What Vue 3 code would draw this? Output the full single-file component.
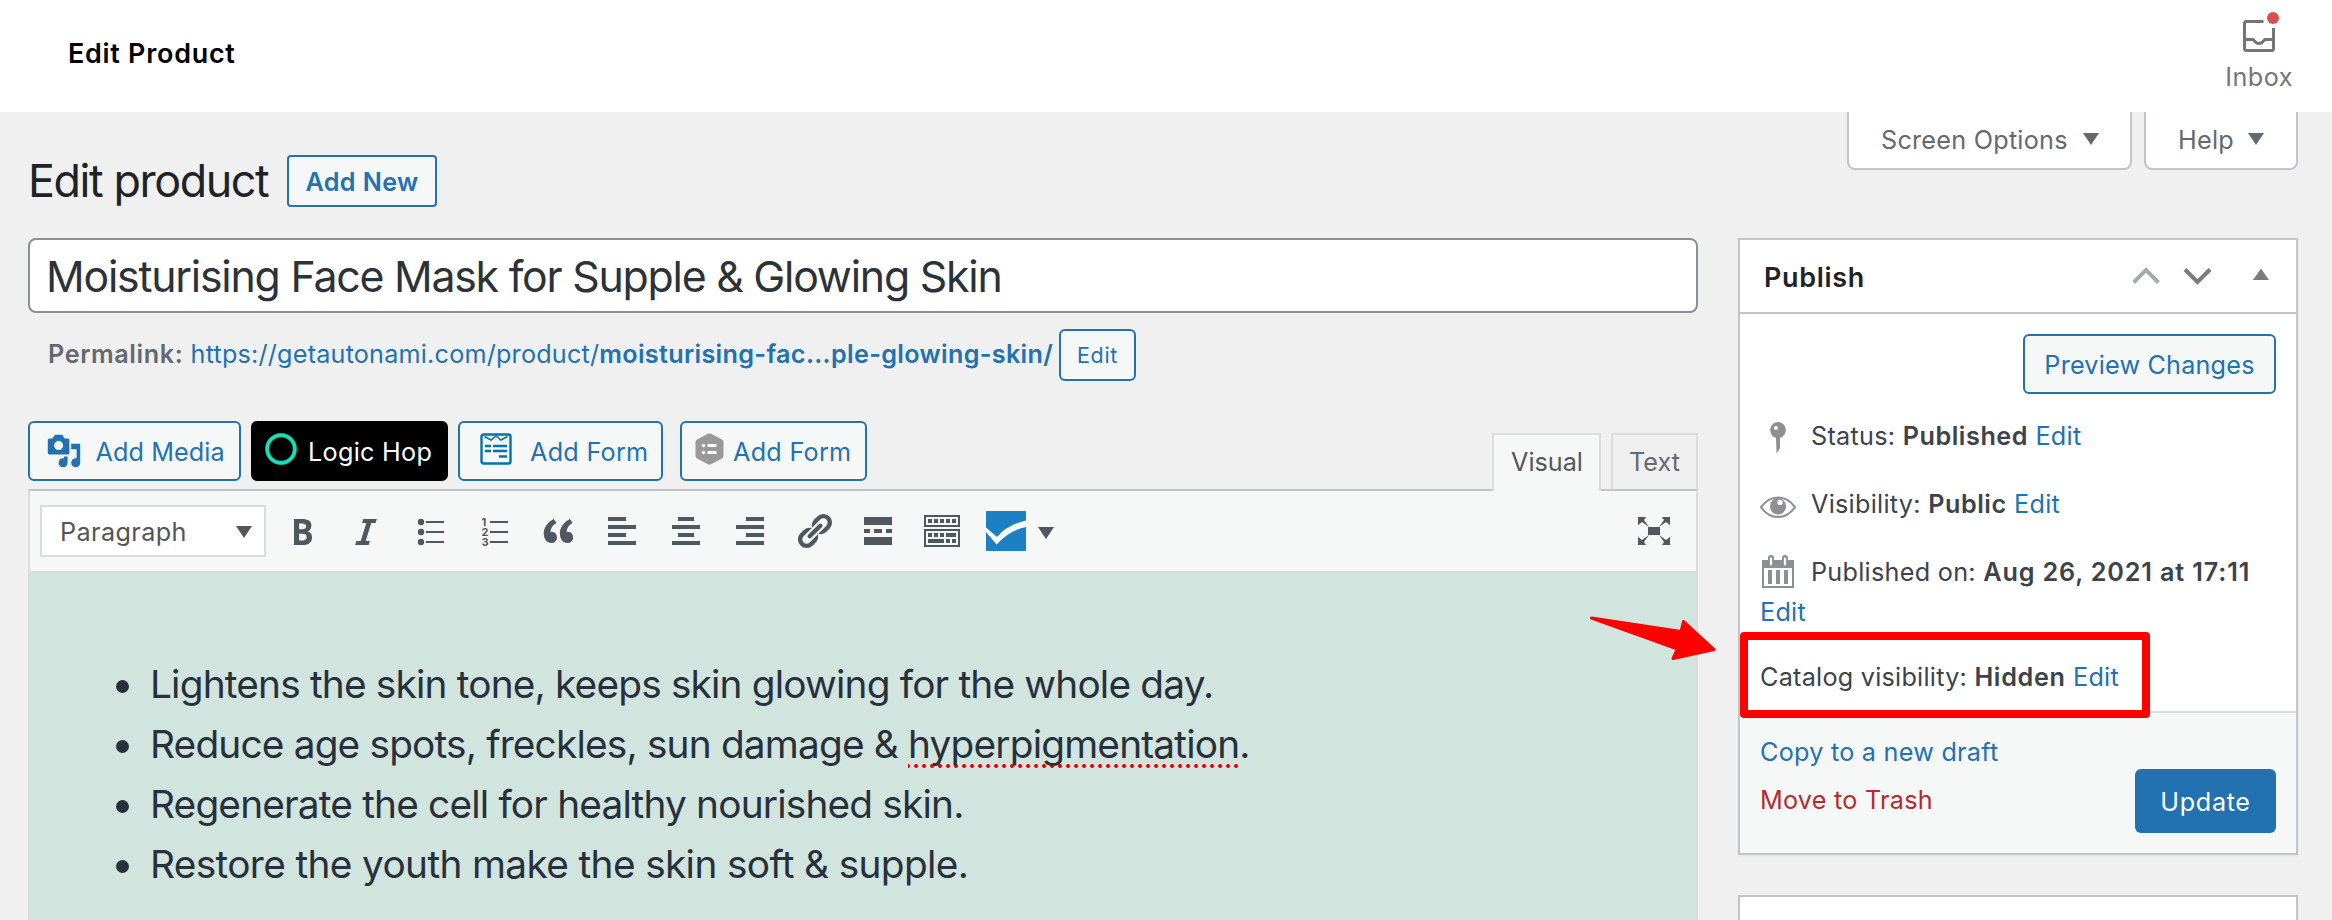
<script setup>
import { ref } from 'vue'

const title = ref('Moisturising Face Mask for Supple & Glowing Skin')

// Bar geometry [x, y, width] for the text alignment buttons
const alignIcons = [
  { name: 'left', bars: [[6, 6, 18], [6, 14, 28], [6, 22, 18], [6, 30, 28]] },
  { name: 'center', bars: [[12, 6, 16], [6, 14, 28], [12, 22, 16], [6, 30, 28]] },
  { name: 'right', bars: [[16, 6, 18], [6, 14, 28], [16, 22, 18], [6, 30, 28]] },
]
const keyboardKeys = [
  [6, 8, 4], [12, 8, 4], [18, 8, 4], [24, 8, 4], [30, 8, 4],
  [6, 22, 4], [12, 22, 4], [18, 22, 4], [24, 22, 10],
  [6, 28, 16], [24, 28, 4], [30, 28, 4],
]
</script>

<template>
  <div class="page">
    <header class="topbar">
      <h2 class="topbar-title">Edit Product</h2>
      <div class="inbox">
        <svg class="inbox-icon" width="38" height="42" viewBox="0 0 38 42">
          <path d="M21.5 11.5H4.5a2 2 0 0 0-2 2v25a2 2 0 0 0 2 2h25a2 2 0 0 0 2-2V18M2.5 29.500h8.500c1.500 0 1.500 4 6 4s4.500-4 6-4h8.500" fill="none" stroke="#757575" stroke-width="3" />
          <circle cx="31" cy="8" r="6" fill="#d94f4f" />
        </svg>
        <span class="inbox-label">Inbox</span>
      </div>
    </header>

    <div class="content-head">
      <div class="heading">
        <h1>Edit product</h1>
        <a class="btn add-new">Add New</a>
      </div>
      <div class="meta-links">
        <a class="meta-link options">Screen Options<svg width="16" height="12"><path d="M0 0h16L8 12z" fill="#646970" /></svg></a>
        <a class="meta-link help">Help<svg width="16" height="12"><path d="M0 0h16L8 12z" fill="#646970" /></svg></a>
      </div>
    </div>

    <div class="columns">
      <main class="primary">
        <div class="title-box">{{ title }}</div>
        <div class="permalink">
          <span class="permalink-text"><b>Permalink:</b> <a>https://getautonami.com/product/<b>moisturising-fac...ple-glowing-skin/</b></a></span>
          <a class="btn edit-slug">Edit</a>
        </div>

        <div class="media-row">
          <a class="btn media">
            <svg width="36" height="36" viewBox="0 0 20 20" fill="#2271b1"><path d="M13 11V4c0-.55-.45-1-1-1h-1.670L9 1H5L3.670 3H2c-.55 0-1 .45-1 1v7c0 .55.45 1 1 1h10c.55 0 1-.45 1-1zM7 4.500c1.380 0 2.500 1.120 2.500 2.500S8.380 9.500 7 9.500 4.500 8.380 4.500 7 5.620 4.500 7 4.500zM14 6h5v10.500c0 1.380-1.120 2.500-2.500 2.500S14 17.880 14 16.500s1.120-2.500 2.500-2.500c.17 0 .34.02.5.05V9h-3V6zm-4 8.050V13h2v3.500c0 1.380-1.120 2.500-2.500 2.500S7 17.880 7 16.500 8.120 14 9.500 14c.17 0 .34.02.5.05z" /></svg>
            <span>Add Media</span>
          </a>
          <a class="btn logic">
            <svg width="32" height="32" viewBox="0 0 32 32"><circle cx="16" cy="16" r="13.800" fill="none" stroke="#0f8f78" stroke-width="4.400" /><circle cx="16" cy="16" r="13.800" fill="none" stroke="#17dfbb" stroke-width="3.200" /></svg>
            <span>Logic Hop</span>
          </a>
          <a class="btn form-a">
            <svg width="32" height="32" viewBox="0 0 32 32" fill="none" stroke="#0073aa">
              <rect x="1.500" y="1.500" width="29" height="29" rx="2" stroke-width="2.400" />
              <path d="M4.500 3.500L11 7l5-4 5 4 6.500-3.500" stroke-width="1.600" />
              <path d="M5 13h6M13 13h14M5 18h6M13 18h14M19 23.500h8" stroke-width="2.400" />
            </svg>
            <span>Add Form</span>
          </a>
          <a class="btn form-b">
            <svg width="29" height="32" viewBox="0 0 29 32">
              <path d="M12.500 1q2-1 4 0l10.500 5.500q1.500 1 1.500 3v13q0 2-1.500 3L16.500 31q-2 1-4 0L2 25.500q-1.500-1-1.500-3v-13q0-2 1.500-3z" fill="#999" />
              <g fill="#fff"><circle cx="8.500" cy="12.500" r="1.700" /><circle cx="8.500" cy="19.500" r="1.700" /><path d="M12.500 11h9v3h-9zM12.500 18h9v3h-9z" /></g>
            </svg>
            <span>Add Form</span>
          </a>
          <div class="tabs">
            <a class="tab active">Visual</a>
            <a class="tab text-tab">Text</a>
          </div>
        </div>

        <section class="editor">
          <div class="toolbar">
            <div class="format">Paragraph<svg width="16" height="12"><path d="M0 0h16L8 12z" fill="#50575e" /></svg></div>
            <div class="tools">
              <svg viewBox="0 0 20 20"><path d="M6 4v13h4.540c1.370 0 2.460-.33 3.260-1 .8-.66 1.200-1.580 1.200-2.770 0-.84-.17-1.510-.51-2.010s-.9-.85-1.670-1.030v-.09c.57-.1 1.020-.4 1.360-.9s.51-1.130.51-1.910c0-1.140-.39-1.980-1.170-2.500C12.750 4.260 11.500 4 9.780 4H6zm2.570 5.150V6.260h1.360c.73 0 1.270.11 1.610.32.34.22.51.58.51 1.070 0 .54-.16.92-.47 1.150s-.82.35-1.510.35h-1.500zm0 2.190h1.600c1.440 0 2.160.53 2.160 1.610 0 .6-.17 1.050-.51 1.340s-.86.43-1.570.43H8.570v-3.380z" /></svg>
              <svg viewBox="0 0 20 20"><path d="M14.780 6h-2.130l-2.800 9h2.120l-.62 2H4.600l.62-2h2.140l2.800-9H8.030l.62-2h6.750z" /></svg>
              <svg viewBox="0 0 40 40"><circle v-for="y in [11, 21, 31]" :key="y" cx="11" :cy="y" r="3.200" /><path d="M16 10h18v2H16zM16 20h18v2H16zM16 30h18v2H16z" /></svg>
              <svg viewBox="0 0 40 40"><text v-for="n in 3" :key="n" class="ol-number" x="7.500" :y="4.500 + n * 10">{{ n }}</text><path d="M16 10h18v2H16zM16 20h18v2H16zM16 30h18v2H16z" /></svg>
              <svg viewBox="0 0 20 20"><path d="M9.490 13.220c0-.74-.2-1.380-.61-1.900-.62-.78-1.830-.88-2.530-.72-.29-1.650 1.110-3.750 2.920-4.650L7.880 4c-2.730 1.300-5.420 4.280-4.960 8.050C3.210 14.430 4.590 16 6.540 16c.85 0 1.560-.25 2.120-.75s.83-1.180.83-2.030zm8.050 0c0-.74-.2-1.380-.61-1.900-.63-.78-1.830-.88-2.530-.72-.29-1.650 1.110-3.750 2.920-4.650L15.930 4c-2.730 1.300-5.410 4.280-4.950 8.050.29 2.380 1.660 3.950 3.610 3.950.85 0 1.560-.25 2.120-.75s.83-1.180.83-2.030z" /></svg>
              <svg v-for="icon in alignIcons" :key="icon.name" viewBox="0 0 40 40"><rect v-for="([x, y, w], i) in icon.bars" :key="i" :x="x" :y="y" :width="w" height="4" /></svg>
              <svg viewBox="0 0 20 20"><path d="M17.740 2.760c1.680 1.690 1.680 4.410 0 6.100l-1.530 1.520c-1.120 1.120-2.700 1.470-4.140 1.090l2.620-2.610.76-.77.76-.76c.84-.84.84-2.200 0-3.040-.84-.85-2.200-.85-3.040 0l-.77.76-3.380 3.380c-.37-1.440-.02-3.020 1.100-4.140l1.520-1.530c1.690-1.680 4.420-1.680 6.100 0zM8.590 13.430l5.340-5.340c.42-.42.42-1.100 0-1.520-.44-.43-1.130-.39-1.530 0l-5.330 5.340c-.42.42-.42 1.100 0 1.520.44.43 1.130.39 1.520 0zm-.76 2.290l4.140-4.150c.38 1.440.03 3.020-1.090 4.140l-1.520 1.530c-1.690 1.680-4.410 1.680-6.100 0-1.680-1.680-1.680-4.420 0-6.100l1.530-1.520c1.120-1.120 2.700-1.470 4.140-1.100l-4.140 4.150c-.85.84-.85 2.200 0 3.050.84.84 2.200.84 3.040 0z" /></svg>
              <svg viewBox="0 0 40 40"><path d="M6 6h28v8H6zM6 18h6v4H6zM16 18h8v4h-8zM28 18h6v4h-6zM6 26h28v8H6z" /></svg>
              <svg viewBox="0 0 40 40"><path d="M3 5h34v10H3zM3 19h34v16H3z" fill="none" stroke="#50575e" stroke-width="2" /><rect v-for="([x, y, w], i) in keyboardKeys" :key="i" :x="x" :y="y" :width="w" height="4" /></svg>
              <svg viewBox="0 0 40 40"><rect width="40" height="40" rx="1" fill="#1e80c4" /><path d="M0 16.500L11 26Q21 14 40 9.500V16Q24 19 10.500 33.500L0 21z" fill="#fff" /></svg>
              <svg class="menu-caret" viewBox="0 0 16 12"><path d="M0 0h16L8 12z" /></svg>
            </div>
            <svg class="fullscreen" viewBox="0 0 40 40">
              <path d="M14 16h12v8H14zM4 6h8L10 9l5 7-7-5-4 3zM36 6h-8l2 3-5 7 7-5 4 3zM4 34h8l-2-3 5-7-7 5-4-3zM36 34h-8l2-3-5-7 7 5 4-3z" />
            </svg>
          </div>
          <div class="body">
            <ul>
              <li>Lightens the skin tone, keeps skin glowing for the whole day.</li>
              <li>Reduce age spots, freckles, sun damage &amp; <span class="misspelled">hyperpigmentation</span>.</li>
              <li>Regenerate the cell for healthy nourished skin.</li>
              <li class="last">Restore the youth make the skin soft &amp; supple.</li>
            </ul>
          </div>
        </section>

        <svg class="pointer" width="128" height="48" viewBox="0 0 128 48">
          <path d="M3.500 2L93 15.500 95.500 5.500 126 33.500 85 42.500 89.500 33z" fill="red" stroke="red" stroke-width="3" stroke-linejoin="round" />
        </svg>
      </main>

      <aside class="side">
        <section class="postbox">
          <div class="postbox-head">
            <h2>Publish</h2>
            <svg width="136" height="18" viewBox="0 0 136 18">
              <path d="M0.500 15.500L13 3l12.500 12.500" fill="none" stroke="#a7aaad" stroke-width="4" />
              <path d="M52 2.500L64.500 15 77 2.500" fill="none" stroke="#787c82" stroke-width="4" />
              <path d="M120 13h16L128 1.500z" fill="#787c82" />
            </svg>
          </div>
          <div class="postbox-body">
            <a class="btn preview">Preview Changes</a>
            <div class="row">
              <svg viewBox="0 0 40 40"><path d="M20 6a8 8 0 0 1 2 15.700V32l-3.500 5.500L18 21.700A8 8 0 0 1 20 6zm-2 4a2 2 0 1 0 0 4 2 2 0 0 0 0-4z" fill-rule="evenodd" /></svg>
              <p>Status: <b>Published</b> <a>Edit</a></p>
            </div>
            <div class="row">
              <svg viewBox="0 0 40 40"><path d="M3 23.200Q10 13.500 20 13.500T37 23.200Q30 33 20 33T3 23.200z" fill="none" stroke="#8c8f94" stroke-width="2" /><path d="M20 14a8 8.300 0 1 1 0 16.600 8 8.300 0 0 1 0-16.600zm2 1.700a2.700 2.700 0 1 0 0 5.400 2.700 2.700 0 0 0 0-5.400z" fill-rule="evenodd" /></svg>
              <p>Visibility: <b>Public</b> <a>Edit</a></p>
            </div>
            <div class="row published">
              <svg viewBox="0 0 40 40"><path d="M4 8h32v28H4zm2 8v18h28V16z" fill-rule="evenodd" /><path d="M10 18h4v14h-4zM18 18h4v14h-4zM26 18h4v14h-4z" /><path d="M13 6v6M27 6v6" stroke="#8c8f94" stroke-width="6" stroke-linecap="round" /><path d="M13 6.500v6M27 6.500v6" stroke="#fff" stroke-width="2.200" stroke-linecap="round" /></svg>
              <p>Published on: <b class="date">Aug 26, 2021 at 17:11</b></p>
              <a class="edit-date">Edit</a>
            </div>
            <p class="catalog">Catalog visibility: <b class="hidden-value">Hidden</b> <a>Edit</a></p>
            <div class="highlight"></div>
          </div>
          <div class="postbox-foot">
            <div class="foot-links">
              <a>Copy to a new draft</a>
              <a class="trash">Move to Trash</a>
            </div>
            <a class="update">Update</a>
          </div>
        </section>
        <section class="postbox next"></section>
      </aside>
    </div>
  </div>
</template>

<style>
body { background: #f0f0f1; overflow: hidden; }
</style>

<style scoped>
.page {
  width: 2332px;
  height: 920px;
  overflow: hidden;
  background: #f0f0f0;
  font-family: Inter, "Liberation Sans", sans-serif;
  font-size: 25.2px;
  letter-spacing: 0.28px;
  color: #3c434a;
  white-space: nowrap;
}
.page * { box-sizing: border-box; }
h1, h2, p, ul { margin: 0; padding: 0; }
svg { display: block; flex: none; }
a { color: #2271b1; }
b { font-weight: 600; letter-spacing: 0.55px; }

.topbar { display: flex; justify-content: space-between; height: 112px; padding: 0 39px 0 68px; background: #fff; }
.topbar-title { font-size: 26.900px; font-weight: 600; letter-spacing: 0.75px; line-height: 106px; color: #000; }
.inbox { display: flex; flex-direction: column; align-items: center; padding-top: 10px; color: #757575; }
.inbox-icon { margin-left: 3px; }
.inbox-label { line-height: 50px; letter-spacing: 0.5px; }

.content-head { display: flex; justify-content: space-between; align-items: flex-start; height: 126px; padding: 0 34px 0 28px; }
.heading { display: flex; align-items: center; margin-top: 43px; height: 52px; }
h1 { width: 259px; font-size: 44.800px; font-weight: 400; letter-spacing: -1.400px; color: #1d2327; }
.btn { display: flex; align-items: center; background: #f6f7f7; border: 2px solid #2271b1; border-radius: 6px; }
.add-new { height: 52px; width: 150px; padding-top: 1px; justify-content: center; border-radius: 4px; font-weight: 600; letter-spacing: 0.360px; }
.meta-links { display: flex; gap: 12px; }
.meta-link { display: flex; height: 58px; padding-top: 1px; line-height: 54px; background: #fff; border: 2px solid #c3c4c7; border-top: 0; border-radius: 0 0 8px 8px; color: #646970; }
.meta-link svg { margin: 20px 0 0 auto; }
.options { width: 285px; padding-left: 32px; padding-right: 31px; letter-spacing: 0.250px; }
.help { width: 154px; padding-left: 32px; padding-right: 32px; }

.columns { display: flex; gap: 40px; padding: 0 34px 0 28px; }
.primary { width: 1670px; position: relative; }
.title-box { height: 75px; padding: 1px 0 0 16px; border: 2px solid #8c8f94; border-radius: 8px; background: #fff; font-size: 42.800px; line-height: 71px; letter-spacing: -1.220px; color: #2c3338; }
.permalink { display: flex; height: 52px; margin-top: 16px; padding-left: 20px; color: #646970; }
.permalink-text { width: 1011px; line-height: 50px; letter-spacing: 0.200px; }
.permalink-text b { letter-spacing: 0.600px; }
.permalink-text a b { letter-spacing: 0.330px; }
.edit-slug { width: 77px; justify-content: center; font-size: 21.400px; letter-spacing: 0.700px; }

.media-row { display: flex; height: 68px; margin-top: 40px; }
.media-row .btn { height: 60px; }
.media-row .btn span { padding-top: 1px; }
.media { width: 213px; padding-left: 15.500px; gap: 14px; letter-spacing: 0.1px; }
.logic { width: 197px; margin-left: 10px; padding-left: 12px; gap: 11px; background: #000; border-color: #000; color: #fff; }
.logic svg { margin-top: -4px; }
.form-a { width: 205px; margin-left: 10px; padding-left: 20px; gap: 18px; }
.form-a svg, .form-b svg { margin-top: -4px; }
.form-b { width: 187px; margin-left: 17px; padding-left: 13px; gap: 9px; }
.tabs { display: flex; gap: 10px; margin: 12px 0 0 auto; position: relative; }
.tab { height: 56px; line-height: 54px; border: 2px solid #dcdcde; border-bottom: 0; background: #f0f0f0; color: #646970; letter-spacing: 0; }
.active { width: 109px; height: 58px; padding-left: 17px; background: #f6f7f7; color: #50575e; }
.text-tab { width: 87px; padding-left: 16px; }

.editor { border: 2px solid #dcdcde; border-top-color: #c3c4c7; height: 440px; background: #d1e4dd; }
.toolbar { display: flex; align-items: center; height: 82px; padding: 0 22px 0 10px; background: #f6f7f7; border-bottom: 2px solid #dcdcde; }
.format { display: flex; align-items: center; justify-content: space-between; width: 226px; height: 52px; padding: 1px 12px 0 18px; border: 2px solid #dcdcde; background: #fff; color: #555; letter-spacing: 0.400px; }
.tools { display: flex; gap: 24px; margin-left: 16px; fill: #50575e; }
.tools svg { width: 40px; height: 40px; }
.tools .menu-caret { width: 16px; height: 12px; margin: 16px 0 0 -12px; }
.ol-number { font-size: 11px; font-weight: 700; letter-spacing: 0; }
.fullscreen { width: 40px; height: 40px; margin-left: auto; fill: #50575e; }
.body { padding: 81px 0 0 121px; }
ul { list-style: none; color: #28303d; font-size: 38.800px; letter-spacing: -0.820px; line-height: 60px; }
li { display: flex; align-items: center; height: 60px; white-space: pre; }
li::before { content: ""; flex: none; width: 13px; height: 13px; margin: 5px 21px 0 -35px; border-radius: 50%; background: #28303d; }
.last { letter-spacing: -0.640px; }
.misspelled { height: 48px; line-height: 48px; background: radial-gradient(circle, #f00 1.600px, transparent 2.200px) -4px 100% / 8px 4px repeat-x; }
.pointer { position: absolute; left: 1560px; top: 378px; z-index: 2; }

.side { width: 560px; }
.postbox { border: 2px solid #c3c4c7; background: #fff; box-shadow: 0 2px 2px rgba(0, 0, 0, 0.04); }
.postbox-head { display: flex; align-items: center; justify-content: space-between; height: 74px; padding: 0 27px 0 24px; border-bottom: 2px solid #c3c4c7; }
.postbox-head h2 { padding-top: 2px; font-size: 26.900px; font-weight: 600; letter-spacing: 0.700px; color: #1d2327; }
.postbox-body { position: relative; height: 399px; padding: 20px 20px 0; border-bottom: 2px solid #dcdcde; }
.preview { width: 253px; height: 60px; margin-left: auto; padding-top: 1px; justify-content: center; letter-spacing: 0.200px; }
.row { display: grid; grid-template-columns: 51px 1fr; height: 68px; padding: 22px 0 0; line-height: 40px; }
.row svg { width: 40px; height: 40px; margin-left: -2px; fill: #8c8f94; }
.row p { line-height: 41px; height: 40px; }
.date { letter-spacing: 0.850px; }
.published { height: 102px; }
.edit-date { grid-column: 1 / 3; line-height: 41px; }
.catalog { margin-top: 25px; line-height: 40px; letter-spacing: 0.250px; }
.hidden-value { letter-spacing: 0.700px; }
.highlight { position: absolute; left: 0; top: 318px; width: 410px; height: 86px; border: 8px solid #f00; border-radius: 4px; }
.postbox-foot { display: flex; justify-content: space-between; height: 140px; padding: 15px 20px 0; background: #f6f7f7; }
.foot-links { display: flex; flex-direction: column; line-height: 48px; letter-spacing: 0.250px; }
.foot-links .trash { color: #b32d2e; }
.update { width: 141px; height: 64px; margin-top: 41px; line-height: 66px; text-align: center; border-radius: 6px; background: #2271b1; color: #fff; letter-spacing: 0.650px; }
.next { height: 60px; margin-top: 40px; }
</style>
